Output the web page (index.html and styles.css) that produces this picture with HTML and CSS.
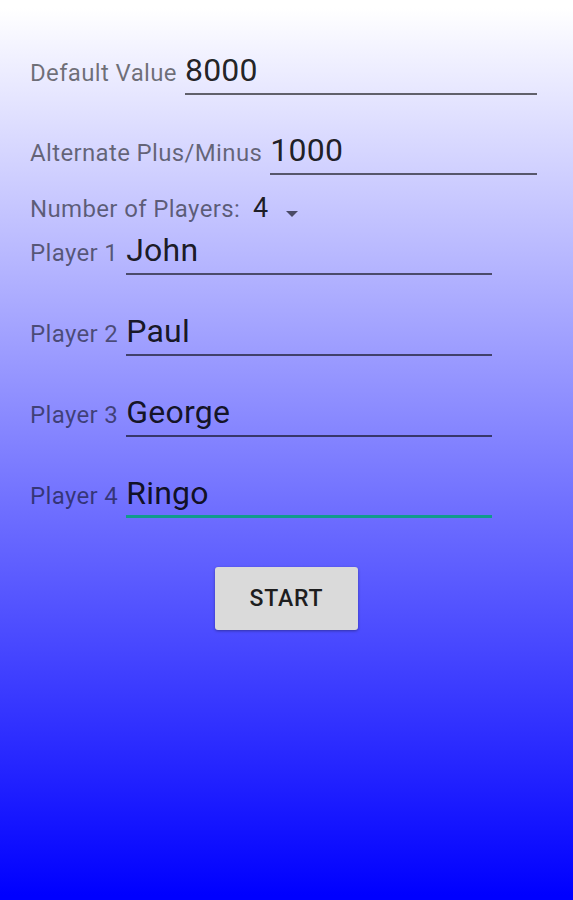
FILE: index.html
```html
<!DOCTYPE html>
<html>
<head>
<meta charset="utf-8">
<link rel="stylesheet" href="styles.css">
</head>
<body>
<div class="screen">
  <div class="form">
    <div class="row row-first">
      <span class="label">Default Value</span>
      <div class="field">8000</div>
    </div>
    <div class="row row-second">
      <span class="label">Alternate Plus/Minus</span>
      <div class="field">1000</div>
    </div>
    <div class="row spinner-row">
      <span class="label">Number of Players:</span>
      <span class="spinner-value">4</span>
      <svg class="spinner-arrow" width="12" height="6" viewBox="0 0 12 6"><polygon points="0,0 12,0 6,6" fill="#4a4a66"/></svg>
    </div>
    <div class="row player player-first">
      <span class="label">Player 1</span>
      <div class="field player-field">John</div>
    </div>
    <div class="row player">
      <span class="label">Player 2</span>
      <div class="field player-field">Paul</div>
    </div>
    <div class="row player">
      <span class="label">Player 3</span>
      <div class="field player-field">George</div>
    </div>
    <div class="row player">
      <span class="label">Player 4</span>
      <div class="field player-field focused">Ringo</div>
    </div>
  </div>
  <div class="actions">
    <button class="start-btn">START</button>
  </div>
</div>
</body>
</html>
```

FILE: styles.css
```css
html, body {
  margin: 0;
  padding: 0;
}

body {
  font-family: Roboto, "Noto Sans", sans-serif;
}

.screen {
  width: 573px;
  height: 900px;
  background: linear-gradient(to bottom, #ffffff 0px, #ffffff 8px, #0000ff 895px);
  overflow: hidden;
}

.form {
  display: flex;
  flex-direction: column;
  padding: 52px 36px 0 30px;
}

.row {
  display: flex;
  align-items: baseline;
}

.row-second {
  margin-top: 37px;
}

.label {
  font-size: 24px;
  letter-spacing: 0.35px;
  color: rgba(0, 0, 0, 0.54);
  white-space: nowrap;
}

.field {
  flex: 1;
  margin-left: 8px;
  font-size: 32px;
  letter-spacing: 0.25px;
  line-height: 36px;
  padding-bottom: 5px;
  color: rgba(0, 0, 0, 0.87);
  border-bottom: 2px solid rgba(0, 0, 0, 0.58);
}

.spinner-row {
  margin-top: 17px;
  line-height: 32px;
}

.spinner-value {
  font-size: 27px;
  margin-left: 13px;
  color: rgba(0, 0, 0, 0.87);
}

.spinner-arrow {
  margin-left: 18px;
  margin-bottom: 9px;
}

.player {
  margin-top: 38px;
}

.player-first {
  margin-top: 6px;
}

.player-field {
  flex: 0 0 366px;
}

.focused {
  border-bottom: 3px solid #119a8c;
  padding-bottom: 4px;
}

.actions {
  display: flex;
  justify-content: center;
  margin-top: 49px;
}

.start-btn {
  width: 143px;
  height: 63px;
  border: none;
  border-radius: 3px;
  background: #dadada;
  box-shadow: 0 1px 3px rgba(0, 0, 0, 0.35);
  font-family: Roboto, "Noto Sans", sans-serif;
  font-weight: 500;
  font-size: 23px;
  letter-spacing: 0.8px;
  color: #1e1e1e;
  padding: 0;
}
```
